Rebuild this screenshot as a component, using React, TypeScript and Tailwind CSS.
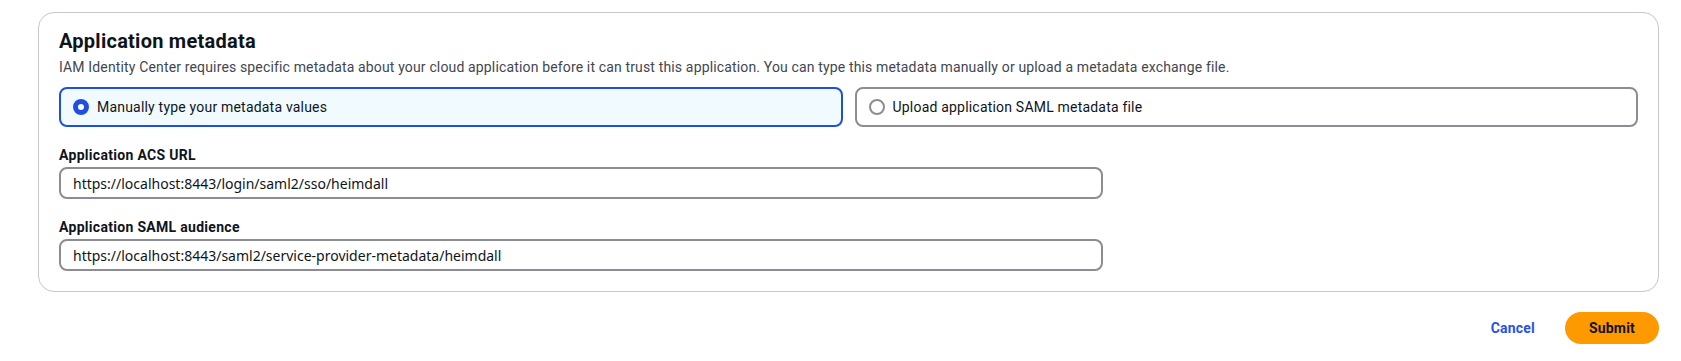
import { useState } from 'react'

type Option = {
  id: string
  label: string
}

const options: Option[] = [
  { id: 'manual', label: 'Manually type your metadata values' },
  { id: 'upload', label: 'Upload application SAML metadata file' },
]

const RadioTile = ({ option, checked, onSelect }: { option: Option; checked: boolean; onSelect: () => void }) => (
  <button
    type="button"
    onClick={onSelect}
    className={
      checked
        ? 'flex h-10 flex-1 items-center gap-2 rounded-[8px] border-2 border-[#1f4fe0] bg-[#f0faff] px-3 text-left'
        : 'flex h-10 flex-1 items-center gap-2 rounded-[8px] border-2 border-[#8c8c94] bg-white px-3 text-left'
    }
  >
    {checked ? (
      <span className="h-4 w-4 shrink-0 rounded-full border-[5px] border-[#1f4fe0] bg-white" />
    ) : (
      <span className="h-4 w-4 shrink-0 rounded-full border-2 border-[#8c8c94] bg-white" />
    )}
    <span className="text-[14px] leading-5 tracking-[0.2px] text-[#0f141a]">{option.label}</span>
  </button>
)

const Field = ({ label, value }: { label: string; value: string }) => (
  <div className="flex flex-col gap-[2px]">
    <label className="text-[14px] font-bold leading-5 tracking-[0.3px] text-[#0f141a]">{label}</label>
    <input
      readOnly
      value={value}
      className="h-8 w-[1044px] rounded-[8px] border-2 border-[#8c8c94] bg-white px-3 font-['Noto_Sans',sans-serif] text-[14px] text-[#0f141a] outline-none"
    />
  </div>
)

export default function App() {
  const [selected, setSelected] = useState('manual')

  return (
    <div className="min-h-screen bg-white pl-[38px] pr-[22px] pt-3 font-['Roboto','Noto_Sans',Arial,sans-serif]">
      <div className="rounded-[16px] border border-[#c6c6cd] px-5 pb-5 pt-4">
        <h2 className="text-[20px] font-bold leading-6 tracking-[0.25px] text-[#0f141a]">Application metadata</h2>
        <p className="mt-1 text-[14px] leading-5 tracking-[0.15px] text-[#424650]">
          IAM Identity Center requires specific metadata about your cloud application before it can trust this
          application. You can type this metadata manually or upload a metadata exchange file.
        </p>

        <div className="mt-[10px] flex gap-3">
          {options.map((o) => (
            <RadioTile key={o.id} option={o} checked={selected === o.id} onSelect={() => setSelected(o.id)} />
          ))}
        </div>

        <div className="mt-[18px] flex flex-col gap-[18px]">
          <Field label="Application ACS URL" value="https://localhost:8443/login/saml2/sso/heimdall" />
          <Field
            label="Application SAML audience"
            value="https://localhost:8443/saml2/service-provider-metadata/heimdall"
          />
        </div>
      </div>

      <div className="mt-5 flex items-center justify-end gap-[30px]">
        <button type="button" className="text-[14px] font-bold tracking-[0.2px] text-[#2952e3]">
          Cancel
        </button>
        <button
          type="button"
          className="h-8 rounded-full bg-[#ff9900] px-[24px] text-[14px] font-bold tracking-[0.2px] text-[#0f141a]"
        >
          Submit
        </button>
      </div>
    </div>
  )
}
